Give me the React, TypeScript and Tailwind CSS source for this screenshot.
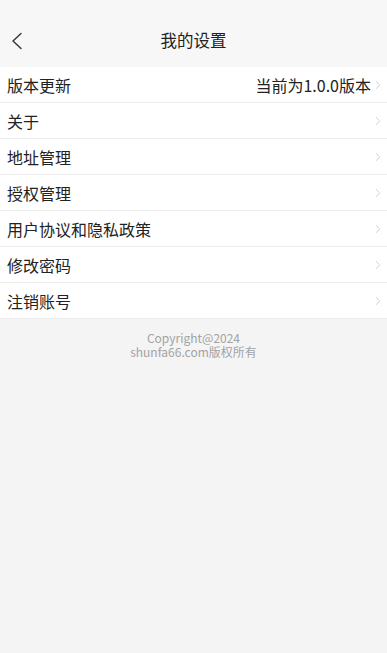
const FONT = { fontFamily: '"Noto Sans CJK SC", "Noto Sans", sans-serif' };

const items = [
  { label: "版本更新", value: "当前为1.0.0版本" },
  { label: "关于" },
  { label: "地址管理" },
  { label: "授权管理" },
  { label: "用户协议和隐私政策" },
  { label: "修改密码" },
  { label: "注销账号" },
];

function Chevron() {
  return (
    <svg width="6" height="10" viewBox="0 0 6 10" fill="none" className="shrink-0">
      <path d="M1.2 1.5L4.8 5L1.2 8.5" stroke="#d0d0d0" strokeWidth="1" strokeLinecap="round" strokeLinejoin="round" />
    </svg>
  );
}

export default function App() {
  return (
    <div className="min-h-[653px] w-[387px] bg-[#f4f4f5] text-[#222]" style={FONT}>
      {/* Header */}
      <div className="relative flex h-[67px] items-end justify-center bg-[#f7f7f7] pb-[17px]">
        <button className="absolute left-[8px] top-[29px] p-[2px]">
          <svg width="14" height="20" viewBox="0 0 14 20" fill="none">
            <path d="M11 2.5L3 10L11 17.5" stroke="#333" strokeWidth="1.4" strokeLinecap="round" strokeLinejoin="round" />
          </svg>
        </button>
        <h1 className="text-[16.5px] leading-[20px] text-[#222]">我的设置</h1>
      </div>

      {/* List */}
      <div className="flex flex-col">
        {items.map((item) => (
          <div
            key={item.label}
            className="flex h-[36px] items-center justify-between border-b border-[#ededed] bg-white pl-[7px] pr-[6px]"
          >
            <span className="text-[16px] leading-[20px]">{item.label}</span>
            <div className="flex items-center gap-[4px]">
              {item.value && <span className="text-[16px] leading-[20px]">{item.value}</span>}
              <Chevron />
            </div>
          </div>
        ))}
      </div>

      {/* Footer */}
      <div className="flex flex-col items-center pt-[12px] text-[12px] leading-[14px] text-[#a3a3a3]">
        <span>Copyright@2024</span>
        <span>shunfa66.com版权所有</span>
      </div>
    </div>
  );
}
